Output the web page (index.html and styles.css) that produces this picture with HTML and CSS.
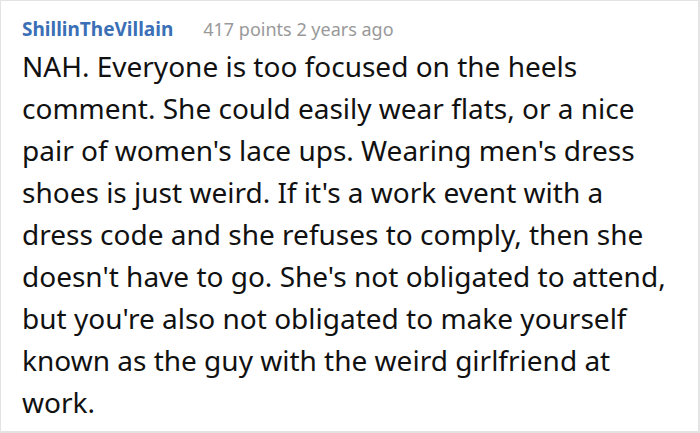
FILE: index.html
```html
<!DOCTYPE html>
<html>
<head>
<meta charset="utf-8">
<link rel="stylesheet" href="styles.css">
</head>
<body>
<div class="comment">
  <div class="meta">
    <span class="author">ShillinTheVillain</span>
    <span class="info">417 points 2 years ago</span>
  </div>
  <p class="text">NAH. Everyone is too focused on the heels<br>comment. She could easily wear flats, or a nice<br>pair of women's lace ups. Wearing men's dress<br>shoes is just weird. If it's a work event with a<br>dress code and she refuses to comply, then she<br>doesn't have to go. She's not obligated to attend,<br>but you're also not obligated to make yourself<br>known as the guy with the weird girlfriend at<br>work.</p>
</div>
</body>
</html>
```
FILE: styles.css
```css
html, body {
  margin: 0;
  padding: 0;
  background: #fff;
}
.comment {
  box-sizing: border-box;
  width: 700px;
  height: 433px;
  border: 1px solid #e3e3e3;
  border-right-width: 2px;
  border-bottom-width: 2px;
  padding: 15px 8px 0 21px;
  font-family: "Noto Sans", sans-serif;
}
.meta {
  display: flex;
  align-items: baseline;
  gap: 30px;
  line-height: 26px;
}
.author {
  color: #3b6fb6;
  font-weight: bold;
  font-size: 19px;
}
.info {
  color: #999;
  font-size: 18px;
}
.text {
  margin: 3px 0 0 0;
  font-size: 28px;
  line-height: 42px;
  color: #111;
  white-space: nowrap;
}
```
